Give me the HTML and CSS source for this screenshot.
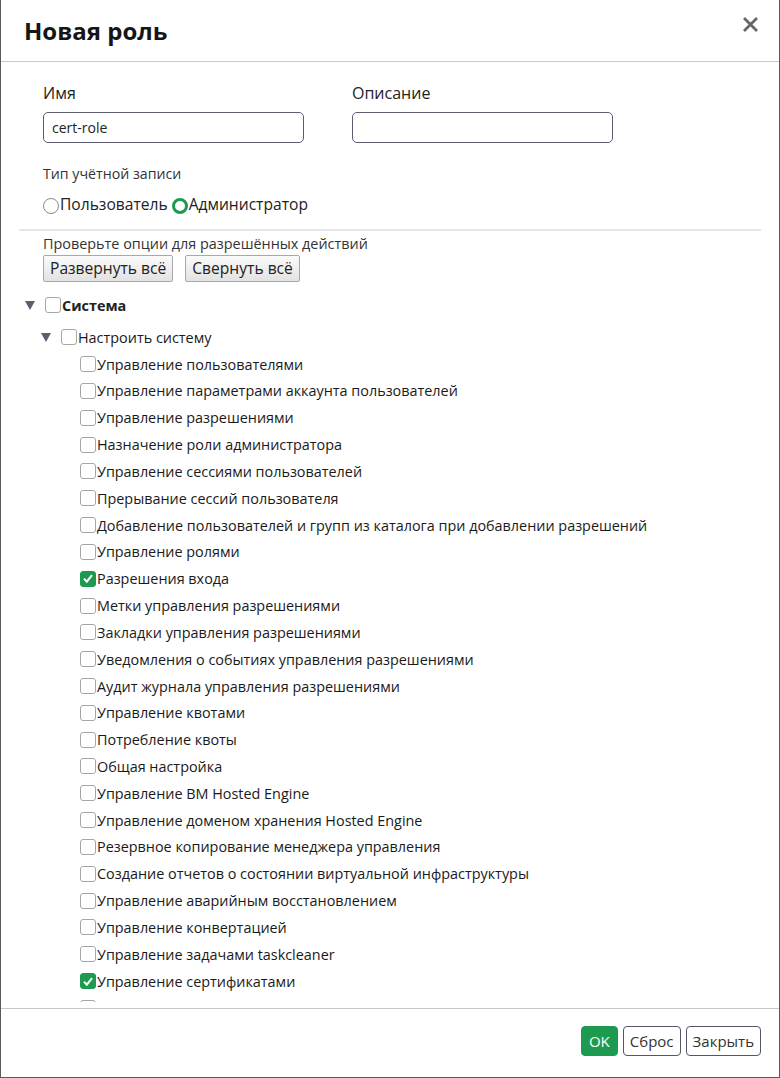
FILE: index.html
```html
<!DOCTYPE html>
<html lang="ru">
<head>
<meta charset="utf-8">
<title>Новая роль</title>
<link rel="stylesheet" href="styles.css">
</head>
<body>
<div class="dialog">
  <div class="header">
    <h1 class="title">Новая роль</h1>
    <span class="close"><svg width="15" height="15" viewBox="0 0 15 15"><path d="M2 2 L13 13 M13 2 L2 13" stroke="#666" stroke-width="2.8" stroke-linecap="square"/></svg></span>
  </div>
  <div class="body">
    <div class="scroll">
      <div class="fields">
        <div class="field">
          <label class="label">Имя</label>
          <div class="input">cert-role</div>
        </div>
        <div class="field">
          <label class="label">Описание</label>
          <div class="input"></div>
        </div>
      </div>
      <div class="acct-label">Тип учётной записи</div>
      <div class="radios">
        <span class="radio"></span><span>Пользователь</span>
        <span class="radio on"></span><span>Администратор</span>
      </div>
      <div class="sep"></div>
      <div class="hint">Проверьте опции для разрешённых действий</div>
      <div class="tools">
        <span class="btn">Развернуть всё</span>
        <span class="btn">Свернуть всё</span>
      </div>
      <div class="tree">
        <div class="row lvl0"><span class="tri"></span><span class="cb"></span><b>Система</b></div>
        <div class="row lvl1"><span class="tri"></span><span class="cb"></span><span>Настроить систему</span></div>
        <div class="children">
          <div class="row lvl2"><span class="cb"></span><span>Управление пользователями</span></div>
          <div class="row lvl2"><span class="cb"></span><span>Управление параметрами аккаунта пользователей</span></div>
          <div class="row lvl2"><span class="cb"></span><span>Управление разрешениями</span></div>
          <div class="row lvl2"><span class="cb"></span><span>Назначение роли администратора</span></div>
          <div class="row lvl2"><span class="cb"></span><span>Управление сессиями пользователей</span></div>
          <div class="row lvl2"><span class="cb"></span><span>Прерывание сессий пользователя</span></div>
          <div class="row lvl2"><span class="cb"></span><span>Добавление пользователей и групп из каталога при добавлении разрешений</span></div>
          <div class="row lvl2"><span class="cb"></span><span>Управление ролями</span></div>
          <div class="row lvl2"><span class="cb on"><svg width="15" height="15" viewBox="0 0 15 15"><path d="M3.2 7.6 L6.2 10.8 L11.8 3.8" fill="none" stroke="#fff" stroke-width="2.2"/></svg></span><span>Разрешения входа</span></div>
          <div class="row lvl2"><span class="cb"></span><span>Метки управления разрешениями</span></div>
          <div class="row lvl2"><span class="cb"></span><span>Закладки управления разрешениями</span></div>
          <div class="row lvl2"><span class="cb"></span><span>Уведомления о событиях управления разрешениями</span></div>
          <div class="row lvl2"><span class="cb"></span><span>Аудит журнала управления разрешениями</span></div>
          <div class="row lvl2"><span class="cb"></span><span>Управление квотами</span></div>
          <div class="row lvl2"><span class="cb"></span><span>Потребление квоты</span></div>
          <div class="row lvl2"><span class="cb"></span><span>Общая настройка</span></div>
          <div class="row lvl2"><span class="cb"></span><span>Управление ВМ Hosted Engine</span></div>
          <div class="row lvl2"><span class="cb"></span><span>Управление доменом хранения Hosted Engine</span></div>
          <div class="row lvl2"><span class="cb"></span><span>Резервное копирование менеджера управления</span></div>
          <div class="row lvl2"><span class="cb"></span><span>Создание отчетов о состоянии виртуальной инфраструктуры</span></div>
          <div class="row lvl2"><span class="cb"></span><span>Управление аварийным восстановлением</span></div>
          <div class="row lvl2"><span class="cb"></span><span>Управление конвертацией</span></div>
          <div class="row lvl2"><span class="cb"></span><span>Управление задачами taskcleaner</span></div>
          <div class="row lvl2"><span class="cb on"><svg width="15" height="15" viewBox="0 0 15 15"><path d="M3.2 7.6 L6.2 10.8 L11.8 3.8" fill="none" stroke="#fff" stroke-width="2.2"/></svg></span><span>Управление сертификатами</span></div>
          <div class="row lvl2"><span class="cb"></span></div>
        </div>
      </div>
    </div>
  </div>
  <div class="footer">
    <span class="fbtn ok">OK</span>
    <span class="fbtn">Сброс</span>
    <span class="fbtn">Закрыть</span>
  </div>
</div>
</body>
</html>
```
FILE: styles.css
```css
html, body {
  margin: 0;
  padding: 0;
  background: #fff;
}
body {
  font-family: "Open Sans", "Noto Sans", sans-serif;
  color: #222;
}
.dialog {
  box-sizing: border-box;
  width: 780px;
  height: 1078px;
  border-left: 1px solid #5a5a5a;
  border-right: 1px solid #5a5a5a;
  border-bottom: 1px solid #5a5a5a;
  display: flex;
  flex-direction: column;
  background: #fff;
}
.header {
  height: 61px;
  flex: none;
  border-bottom: 1px solid #c8c8c8;
  display: flex;
  justify-content: space-between;
  align-items: flex-start;
  padding: 0 21px 0 23px;
}
.title {
  margin: 0;
  padding-top: 16px;
  font-size: 24px;
  line-height: 30px;
  font-weight: 700;
  color: #151515;
}
.close {
  margin-top: 17px;
  display: block;
  width: 15px;
  height: 15px;
}
.close svg { display: block; }
.body {
  flex: 1;
  min-height: 0;
  display: flex;
  flex-direction: column;
  padding: 0 18px 6px 18px;
}
.scroll {
  flex: 1;
  min-height: 0;
  overflow: hidden;
}
.fields {
  display: flex;
  gap: 48px;
  padding-left: 24px;
  margin-top: 20px;
}
.field { width: 261px; }
.label {
  display: block;
  font-size: 16px;
  line-height: 22px;
  color: #222;
  margin-bottom: 8px;
}
.input {
  box-sizing: border-box;
  width: 261px;
  height: 31px;
  border: 1px solid #5c5c70;
  border-radius: 5px;
  padding: 0 8px;
  font-size: 14px;
  line-height: 29px;
  color: #222;
}
.acct-label {
  margin-top: 21px;
  padding-left: 24px;
  font-size: 14.2px;
  line-height: 20px;
  color: #333;
}
.radios {
  margin-top: 9px;
  padding-left: 24px;
  font-size: 15.6px;
  line-height: 22px;
  color: #222;
}
.radio {
  display: inline-block;
  box-sizing: border-box;
  width: 16px;
  height: 16px;
  border: 1px solid #8a8a8a;
  border-radius: 50%;
  vertical-align: -4px;
  margin-right: 1px;
}
.radio.on {
  border: 3px solid #1e9a50;
}
.sep {
  margin-top: 14px;
  height: 2px;
  background: #e6e6e6;
}
.hint {
  margin-top: 3px;
  padding-left: 24px;
  font-size: 14.4px;
  line-height: 20px;
  color: #333;
}
.tools {
  margin-top: 1px;
  padding-left: 24px;
  display: flex;
  gap: 12px;
}
.btn {
  box-sizing: border-box;
  height: 27px;
  padding: 0 6px;
  border: 1px solid #a8a8a8;
  border-radius: 2px;
  background: linear-gradient(#fbfbfb, #e2e2e2);
  font-size: 15.6px;
  line-height: 25px;
  color: #222;
}
.tree {
  margin-top: 10px;
  font-size: 14.4px;
  color: #1a1a1a;
}
.row {
  display: flex;
  align-items: center;
  height: 26.83px;
  white-space: nowrap;
}
.lvl0 { padding-left: 6px; }
.lvl1 { padding-left: 22px; margin-top: 5px; }
.lvl2 { padding-left: 61px; }
.children { margin-top: 0; }
.tri {
  width: 0;
  height: 0;
  border-left: 5px solid transparent;
  border-right: 5px solid transparent;
  border-top: 9px solid #58606e;
  margin-right: 10px;
}
.cb {
  box-sizing: border-box;
  width: 16px;
  height: 16px;
  border: 1px solid #a6a6a6;
  border-radius: 3px;
  background: #fff;
  margin-right: 1px;
  flex: none;
  display: flex;
  align-items: center;
  justify-content: center;
}
.cb.on {
  background: #1e9a50;
  border-color: #1e9a50;
}
.cb svg { display: block; }
.row b { font-weight: 700; color: #222; }
.footer {
  flex: none;
  height: 69px;
  box-sizing: border-box;
  border-top: 1px solid #c8c8c8;
  display: flex;
  justify-content: flex-end;
  align-items: flex-start;
  gap: 5px;
  padding: 17px 18px 0 0;
}
.fbtn {
  box-sizing: border-box;
  height: 30px;
  padding: 0 6px;
  border: 1px solid #55556a;
  border-radius: 4px;
  font-size: 15px;
  line-height: 28px;
  color: #333;
  background: #fff;
}
.fbtn.ok {
  background: #1e9a50;
  border-color: #1e9a50;
  color: #fff;
  padding: 0 7px;
}
```
